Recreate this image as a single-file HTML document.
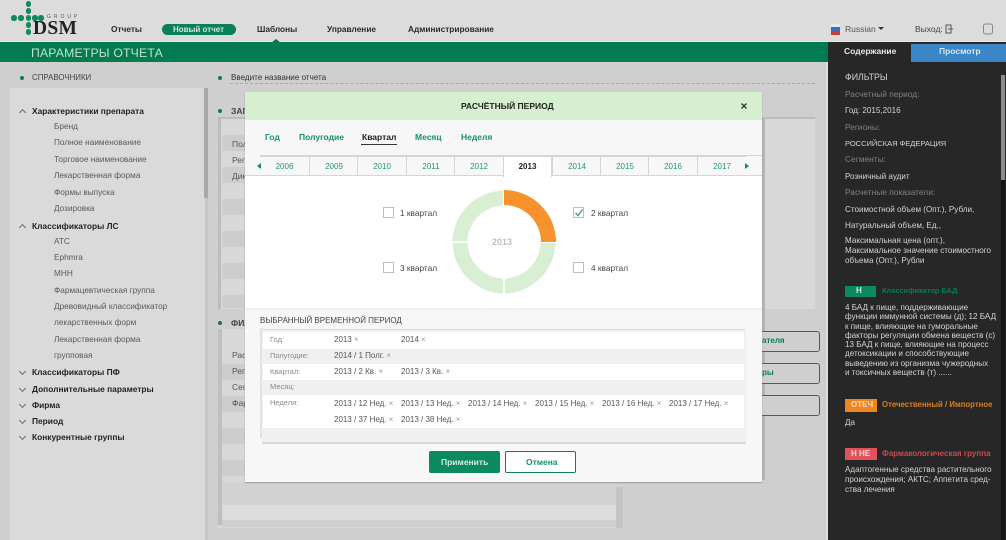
<!DOCTYPE html>
<html lang="ru"><head><meta charset="utf-8"><title>Параметры отчета</title>
<style>
*{box-sizing:border-box}
html,body{margin:0;padding:0;width:1006px;height:540px;overflow:hidden;background:#cfcfcf}
body{position:relative;font-family:"Liberation Sans",sans-serif;font-size:8.5px;color:#333}
div{position:absolute}
.t{position:absolute;white-space:nowrap;line-height:12px}
.b{font-weight:bold}
.nav{font-size:8.3px;font-weight:bold;color:#2a2a2a;top:23px}
.s{left:54px;color:#5a5a5a;font-size:8.25px}
.h{left:32px;color:#222;font-weight:bold;font-size:8.4px}
.up,.dn{position:absolute;left:20px;width:5px;height:5px;border-top:1.3px solid #666;border-left:1.3px solid #666}
.up{transform:rotate(45deg)}
.dn{transform:rotate(225deg)}
.dot{position:absolute;width:4px;height:4px;border-radius:50%;background:#0a7d52}
.ld{position:absolute;width:5.5px;height:5.5px;border-radius:50%;background:#0e8a5b}
.st{position:absolute;left:222px;width:24px;height:16px;background:#cdcdcd}
.yr{position:absolute;top:156px;height:20px;width:49px;border-left:1px solid #d5d5d5;border-top:1px solid #d5d5d5;border-bottom:1px solid #d5d5d5;background:#f7f7f7;color:#1f9a6c;text-align:center;line-height:20px;font-size:8px}
.cb{position:absolute;width:11px;height:11px;border:1px solid #bdbdbd;background:#fff}
.q{position:absolute;font-size:8.3px;color:#444;white-space:nowrap;line-height:12px}
.r{position:absolute;left:263px;width:481px}
.l{position:absolute;left:270px;font-size:7.5px;color:#8a8a8a;line-height:12px}
.v{position:absolute;font-size:8px;color:#555;white-space:nowrap;line-height:12px}
.v i{font-style:normal;color:#999}
.rt{position:absolute;left:845px;font-size:8.1px;line-height:11px;color:#d4d4d4;white-space:nowrap}
.lb{color:#808080;font-size:8.4px}
.mt{position:absolute;top:131px;font-size:8.5px;font-weight:bold;color:#149467;line-height:12px;white-space:nowrap}
.ob{position:absolute;left:740px;width:80px;height:21px;border:1.5px solid #0d7f56;border-radius:3px;background:#cfcfcf}
</style></head><body>

<!-- header -->
<div style="left:0;top:0;width:1006px;height:41px;background:#dcdcdc"></div>
<div style="left:0;top:41px;width:1006px;height:1px;background:#f1e6e6"></div>

<!-- logo -->
<div class="ld" style="left:25.5px;top:1px"></div><div class="ld" style="left:25.5px;top:8px"></div>
<div class="ld" style="left:11px;top:15px"></div><div class="ld" style="left:18px;top:15px"></div><div class="ld" style="left:25.5px;top:15px"></div><div class="ld" style="left:32px;top:15px"></div><div class="ld" style="left:38px;top:15px"></div>
<div class="ld" style="left:25.5px;top:22px"></div><div class="ld" style="left:25.5px;top:29px"></div>
<div class="t" style="left:47px;top:13px;font-size:5px;letter-spacing:3px;color:#555;line-height:8px">GROUP</div>
<div class="t b" style="left:33px;top:20px;font-family:'Liberation Serif',serif;font-size:19.5px;color:#222;letter-spacing:.3px;line-height:17px">DSM</div>

<div class="t nav" style="left:111px">Отчеты</div>
<div style="left:162px;top:24px;width:74px;height:11px;border-radius:6px;background:#0b7f55"></div>
<div class="t b" style="left:173px;top:23.5px;color:#cfe6da;font-size:8px">Новый отчет</div>
<div class="t nav" style="left:257px">Шаблоны</div>
<div class="t nav" style="left:327px">Управление</div>
<div class="t nav" style="left:408px">Администрирование</div>
<svg style="position:absolute;left:271px;top:39px" width="10" height="4"><path d="M0 4L5 0L10 4Z" fill="#0a6b49"/></svg>

<!-- flag -->
<div style="left:831px;top:24px;width:9px;height:4px;background:#e8e8f2"></div>
<div style="left:831px;top:27px;width:9px;height:4px;background:#3a6fb8"></div>
<div style="left:831px;top:31px;width:9px;height:4px;background:#c9403a"></div>
<div class="t" style="left:845px;top:23px;color:#555">Russian</div>
<svg style="position:absolute;left:878px;top:27px" width="6" height="4"><path d="M0 0H6L3 3Z" fill="#333"/></svg>
<div class="t" style="left:915px;top:23px;color:#444">Выход:</div>
<svg style="position:absolute;left:945px;top:24px" width="8" height="10"><path d="M1 1H6V9H1ZM3 5H8" fill="none" stroke="#555" stroke-width="1"/></svg>
<svg style="position:absolute;left:982px;top:22px" width="12" height="14"><rect x="1.5" y="2" width="9" height="10" rx="2" fill="none" stroke="#888"/></svg>

<!-- green bar -->
<div style="left:0;top:42px;width:828px;height:20px;background:#027b50"></div>
<div class="t" style="left:31px;top:45px;color:#c8dfd4;font-size:12.2px;line-height:16px;letter-spacing:.2px">ПАРАМЕТРЫ ОТЧЕТА</div>

<!-- left column -->
<div class="dot" style="left:20px;top:76px"></div>
<div class="t" style="left:32px;top:72px;color:#444;font-size:7.9px">СПРАВОЧНИКИ</div>
<div class="dot" style="left:218px;top:76px"></div>
<div class="t" style="left:231px;top:72px;color:#333;font-size:8.1px">Введите название отчета</div>
<div style="left:230px;top:83px;width:585px;border-top:1px dashed #a8a8a8"></div>

<div style="left:10px;top:88px;width:195px;height:452px;background:#dadada"></div>
<div style="left:204px;top:88px;width:4px;height:110px;background:#a9a9a9"></div>
<div style="left:205px;top:198px;width:3px;height:342px;background:#c6c6c6"></div>

<div class="up" style="top:110px"></div><div class="t h" style="top:105px">Характеристики препарата</div>
<div class="t s" style="top:121px">Бренд</div>
<div class="t s" style="top:137px">Полное наименование</div>
<div class="t s" style="top:154px">Торговое наименование</div>
<div class="t s" style="top:170px">Лекарственная форма</div>
<div class="t s" style="top:187px">Формы выпуска</div>
<div class="t s" style="top:203px">Дозировка</div>
<div class="up" style="top:225px"></div><div class="t h" style="top:220px">Классификаторы ЛС</div>
<div class="t s" style="top:236px">АТС</div>
<div class="t s" style="top:252px">Ephmra</div>
<div class="t s" style="top:268px">МНН</div>
<div class="t s" style="top:285px">Фармацевтическая группа</div>
<div class="t s" style="top:301px">Древовидный классификатор</div>
<div class="t s" style="top:317px">лекарственных форм</div>
<div class="t s" style="top:334px">Лекарственная форма</div>
<div class="t s" style="top:350px">групповая</div>
<div class="dn" style="top:369px"></div><div class="t h" style="top:366px">Классификаторы ПФ</div>
<div class="dn" style="top:386px"></div><div class="t h" style="top:383px">Дополнительные параметры</div>
<div class="dn" style="top:402px"></div><div class="t h" style="top:399px">Фирма</div>
<div class="dn" style="top:418px"></div><div class="t h" style="top:415px">Период</div>
<div class="dn" style="top:434px"></div><div class="t h" style="top:431px">Конкурентные группы</div>

<!-- background panels behind modal -->
<div class="dot" style="left:218px;top:109px"></div>
<div class="t" style="left:231px;top:105px;color:#444;font-weight:bold">ЗАГ</div>
<div style="left:218px;top:117px;width:597px;height:2px;background:#bcbcbc"></div>
<div style="left:218px;top:119px;width:3px;height:190px;background:#bdbdbd"></div>
<div style="left:221px;top:119px;width:594px;height:190px;background:#d8d8d8"></div>
<div class="st" style="top:135px"></div><div class="st" style="top:167px"></div><div class="st" style="top:199px"></div><div class="st" style="top:231px"></div><div class="st" style="top:263px"></div><div class="st" style="top:295px;height:13px"></div>
<div class="t" style="left:232px;top:138px;color:#555">Пол</div>
<div class="t" style="left:232px;top:154px;color:#555">Рег</div>
<div class="t" style="left:232px;top:170px;color:#555">Дин</div>
<div class="dot" style="left:218px;top:321px"></div>
<div class="t b" style="left:231px;top:317px;color:#444">ФИЛ</div>
<div style="left:218px;top:329px;width:405px;height:199px;background:#d8d8d8"></div>
<div style="left:218px;top:329px;width:4px;height:196px;background:#bfbfbf"></div>
<div class="st" style="top:364px"></div><div class="st" style="top:396px"></div><div class="st" style="top:428px"></div><div class="st" style="top:460px"></div>
<div style="left:222px;top:482px;width:400px;height:23px;background:#d2d2d2"></div>
<div style="left:222px;top:505px;width:400px;height:15px;background:#dcdcdc"></div>
<div style="left:222px;top:520px;width:400px;height:7px;background:#cfcfcf"></div>
<div style="left:616px;top:487px;width:7px;height:41px;background:#c4c4c4"></div>
<div class="t" style="left:232px;top:349px;color:#555">Рас</div>
<div class="t" style="left:232px;top:365px;color:#555">Рег</div>
<div class="t" style="left:232px;top:381px;color:#555">Сег</div>
<div class="t" style="left:232px;top:397px;color:#555">Фар</div>
<div style="left:623px;top:309px;width:203px;height:231px;background:#cfcfcf"></div>
<div style="left:762px;top:119px;width:3px;height:361px;background:#b4b4b4"></div>
<div class="ob" style="top:331px"></div><div class="t b" style="left:762px;top:335px;color:#0d7f56;font-size:8px">ателя</div>
<div class="ob" style="top:363px"></div><div class="t b" style="left:762px;top:367px;color:#0d7f56;font-size:8px">ры</div>
<div class="ob" style="top:395px"></div>

<!-- modal -->
<div style="left:245px;top:92px;width:517px;height:390px;background:#f7f7f7;box-shadow:0 1px 1px #999"></div>
<div style="left:245px;top:92px;width:517px;height:28px;background:#d5efcf"></div>
<div class="t b" style="left:461px;top:100px;color:#222;font-size:8.5px">РАСЧЁТНЫЙ ПЕРИОД</div>
<svg style="position:absolute;left:741px;top:103px" width="6" height="6"><path d="M.5 .5L5.5 5.5M5.5 .5L.5 5.5" stroke="#333" stroke-width="1.3"/></svg>

<div class="mt" style="left:265px">Год</div>
<div class="mt" style="left:299px">Полугодие</div>
<div class="mt" style="left:362px;color:#222">Квартал</div>
<div style="left:361px;top:144px;width:36px;height:1px;background:#333"></div>
<div class="mt" style="left:415px">Месяц</div>
<div class="mt" style="left:461px">Неделя</div>

<div style="left:260px;top:155px;width:502px;height:1px;background:#cfd8d3"></div>
<div style="left:245px;top:176px;width:517px;height:132px;background:#fff"></div>
<div style="left:245px;top:175px;width:517px;height:1px;background:#d5d5d5"></div>
<div class="yr" style="left:260px;border-left:none">2006</div>
<div class="yr" style="left:309px">2009</div>
<div class="yr" style="left:357px">2010</div>
<div class="yr" style="left:406px">2011</div>
<div class="yr" style="left:454px">2012</div>
<div class="yr" style="left:503px;background:#fff;color:#222;font-weight:bold;border-bottom:none;height:21px;border-right:1px solid #d5d5d5">2013</div>
<div class="yr" style="left:552px">2014</div>
<div class="yr" style="left:600px">2015</div>
<div class="yr" style="left:648px">2016</div>
<div class="yr" style="left:697px">2017</div>
<svg style="position:absolute;left:257px;top:163px" width="5" height="6"><path d="M4 0V6L0 3Z" fill="#12906a"/></svg>
<svg style="position:absolute;left:745px;top:163px" width="5" height="6"><path d="M0 0V6L4 3Z" fill="#12906a"/></svg>

<!-- donut -->
<svg style="position:absolute;left:450px;top:188px" width="108" height="108" viewBox="0 0 108 108">
<path d="M54 2A52 52 0 0 1 106 54H91A37 37 0 0 0 54 17Z" fill="#f7922c"/>
<path d="M105.5 55A52 52 0 0 1 55 105.5V90.5A37 37 0 0 0 90.5 55Z" fill="#d9efd4"/>
<path d="M53 105.5A52 52 0 0 1 2.5 55H17.5A37 37 0 0 0 53 90.5Z" fill="#d9efd4"/>
<path d="M2.5 53A52 52 0 0 1 53 2.5V17.5A37 37 0 0 0 17.5 53Z" fill="#d9efd4"/>
</svg>
<div class="t" style="left:492px;top:236px;font-size:9px;font-weight:bold;color:#bdbdbd">2013</div>

<div class="cb" style="left:383px;top:207px"></div><div class="q" style="left:400px;top:207px">1 квартал</div>
<div class="cb" style="left:573px;top:207px"></div><div class="q" style="left:591px;top:207px">2 квартал</div>
<svg style="position:absolute;left:574px;top:208px" width="10" height="9"><path d="M1.5 5L4 7.5L8.5 1.5" fill="none" stroke="#4c9a6d" stroke-width="1.4"/></svg>
<div class="cb" style="left:383px;top:262px"></div><div class="q" style="left:400px;top:262px">3 квартал</div>
<div class="cb" style="left:573px;top:262px"></div><div class="q" style="left:591px;top:262px">4 квартал</div>

<!-- selected period -->
<div style="left:245px;top:308px;width:517px;height:2px;background:#efefef"></div>
<div class="t" style="left:260px;top:315px;color:#444;font-size:8px">ВЫБРАННЫЙ ВРЕМЕННОЙ ПЕРИОД</div>
<div style="left:260px;top:328px;width:3px;height:110px;background:#e2e2e2"></div>
<div style="left:262px;top:329px;width:484px;height:115px;background:#f0f0f0;border-top:1px solid #dedede;border-bottom:2px solid #d8d8d8"></div>
<div class="r" style="top:332px;height:17px;background:#fff"></div>
<div class="r" style="top:364px;height:16px;background:#fff"></div>
<div class="r" style="top:395px;height:33px;background:#fff"></div>

<div class="l" style="top:334px">Год:</div>
<div class="l" style="top:350px">Полугодие:</div>
<div class="l" style="top:366px">Квартал:</div>
<div class="l" style="top:381px">Месяц:</div>
<div class="l" style="top:397px">Неделя:</div>

<div class="v" style="left:334px;top:334px">2013 <i>×</i></div><div class="v" style="left:401px;top:334px">2014 <i>×</i></div>
<div class="v" style="left:334px;top:350px">2014 / 1 Полг. <i>×</i></div>
<div class="v" style="left:334px;top:366px">2013 / 2 Кв. <i>×</i></div><div class="v" style="left:401px;top:366px">2013 / 3 Кв. <i>×</i></div>
<div class="v" style="left:334px;top:398px">2013 / 12 Нед. <i>×</i></div>
<div class="v" style="left:401px;top:398px">2013 / 13 Нед. <i>×</i></div>
<div class="v" style="left:468px;top:398px">2013 / 14 Нед. <i>×</i></div>
<div class="v" style="left:535px;top:398px">2013 / 15 Нед. <i>×</i></div>
<div class="v" style="left:602px;top:398px">2013 / 16 Нед. <i>×</i></div>
<div class="v" style="left:669px;top:398px">2013 / 17 Нед. <i>×</i></div>
<div class="v" style="left:334px;top:414px">2013 / 37 Нед. <i>×</i></div>
<div class="v" style="left:401px;top:414px">2013 / 38 Нед. <i>×</i></div>

<div style="left:429px;top:451px;width:71px;height:22px;background:#0b8a5d;border-radius:2px"></div>
<div class="t b" style="left:441px;top:456px;color:#d4efe3;font-size:8.5px">Применить</div>
<div style="left:505px;top:451px;width:71px;height:22px;background:#fff;border:1.5px solid #0d8058;border-radius:2px"></div>
<div class="t b" style="left:526px;top:456px;color:#17936a;font-size:8.5px">Отмена</div>

<!-- right sidebar -->
<div style="left:826px;top:62px;width:2px;height:478px;background:#dedede"></div>
<div style="left:828px;top:42px;width:178px;height:498px;background:#272727"></div>
<div style="left:911px;top:44px;width:95px;height:18px;background:#3a86c8"></div>
<div class="t b" style="left:844px;top:45px;color:#e8e8e8;font-size:8.5px">Содержание</div>
<div class="t b" style="left:939px;top:45px;color:#d5e6f5;font-size:8.5px">Просмотр</div>
<div style="left:1001px;top:75px;width:4px;height:105px;background:#8c8c8c"></div>
<div style="left:1001px;top:180px;width:4px;height:360px;background:#151515"></div>

<div class="rt" style="top:72px;font-size:8.8px">ФИЛЬТРЫ</div>
<div class="rt lb" style="top:89px">Расчетный период:</div>
<div class="rt" style="top:105px">Год: 2015,2016</div>
<div class="rt lb" style="top:122px">Регионы:</div>
<div class="rt" style="top:138px;font-size:7.5px">РОССИЙСКАЯ ФЕДЕРАЦИЯ</div>
<div class="rt lb" style="top:154px">Сегменты:</div>
<div class="rt" style="top:171px">Розничный аудит</div>
<div class="rt lb" style="top:187px">Расчетные показатели:</div>
<div class="rt" style="top:204px">Стоимостной объем (Опт.), Рубли,</div>
<div class="rt" style="top:220px">Натуральный объем, Ед.,</div>
<div class="rt" style="top:236px;line-height:9.8px">Максимальная цена (опт.),<br>Максимальное значение стоимостного<br>объема (Опт.), Рубли</div>

<div style="left:845px;top:286px;width:31px;height:11px;background:#0b8a5d"></div>
<div class="t b" style="left:856px;top:285px;color:#cfe8dc;font-size:8px">Н</div>
<div class="t b" style="left:882px;top:285px;color:#0b7a50;font-size:7.4px">Классификатор БАД</div>
<div class="rt" style="top:303px;line-height:9.3px">4 БАД к пище, поддерживающие<br>функции иммунной системы (д); 12 БАД<br>к пище, влияющие на гуморальные<br>факторы регуляции обмена веществ (с)<br>13 БАД к пище, влияющие на процесс<br>детоксикации и способствующие<br>выведению из организма чужеродных<br>и токсичных веществ (т) ......</div>

<div style="left:845px;top:399px;width:32px;height:13px;background:#f0851f"></div>
<div class="t b" style="left:851px;top:399px;color:#f6dcc0;font-size:8px">ОТЕЧ</div>
<div class="t b" style="left:882px;top:399px;color:#d9801f;font-size:7.8px">Отечественный / Импортное</div>
<div class="rt" style="top:417px">Да</div>

<div style="left:845px;top:448px;width:32px;height:12px;background:#e2525a"></div>
<div class="t b" style="left:851px;top:448px;color:#f5d5d7;font-size:8px">Н НЕ</div>
<div class="t b" style="left:882px;top:448px;color:#c84a50;font-size:8px">Фармакологическая группа</div>
<div class="rt" style="top:465px;line-height:9.8px">Адаптогенные средства растительного<br>происхождения; АКТС; Аппетита сред-<br>ства лечения</div>

</body></html>
